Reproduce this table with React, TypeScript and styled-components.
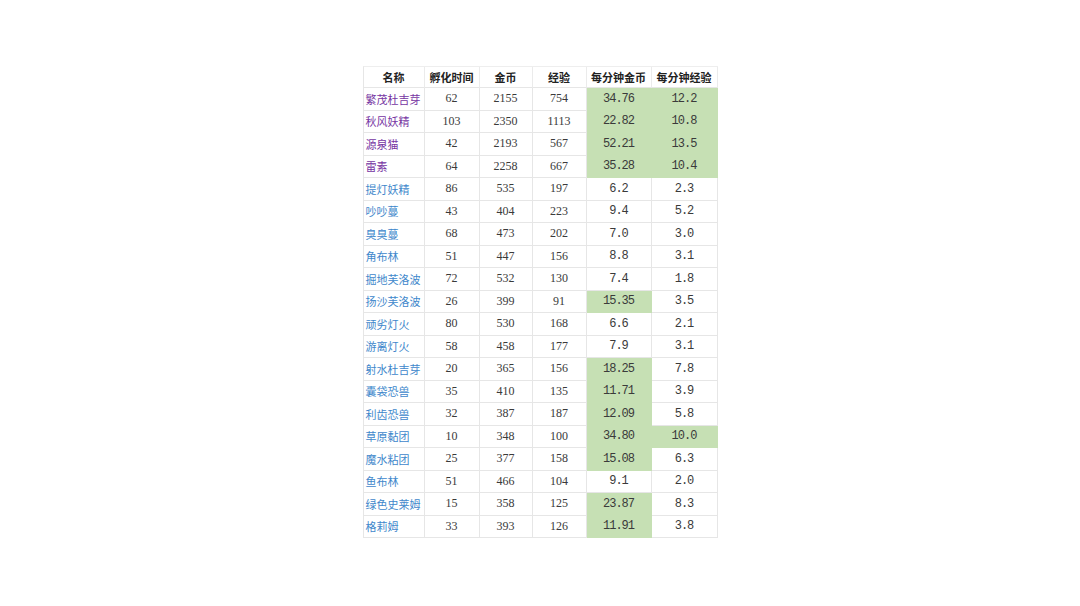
import React from 'react';
import styled, { createGlobalStyle } from 'styled-components';

const GlobalStyle = createGlobalStyle`
    html, body {
        margin: 0;
        padding: 0;
        background: #ffffff;
    }
    * {
        box-sizing: border-box;
    }
`;

const Page = styled.main`
    width: 100%;
    min-height: 100vh;
    display: flex;
    align-items: center;
    justify-content: center;
`;

const Table = styled.table`
    border-collapse: separate;
    border-spacing: 0;
    table-layout: fixed;
    width: 354px;
    border-top: 1px solid #eeeeee;
    border-left: 1px solid #e6e6e6;
    margin-top: -2px;
`;

const HeadRow = styled.tr`
    height: 21px;
`;

const Row = styled.tr`
    height: 22.5px;
`;

const HeadCell = styled.th`
    padding: 0;
    font-family: 'Noto Sans CJK SC', 'Noto Sans', sans-serif;
    font-size: 11px;
    font-weight: 700;
    color: #222;
    text-align: center;
    border-right: 1px solid #ebebeb;
    border-bottom: 1px solid #e6e6e6;
    white-space: nowrap;
`;

const NameCell = styled.td<{ $tone: 'purple' | 'blue' }>`
    padding: 0 0 0 2px;
    font-family: 'Noto Sans CJK SC', 'Noto Sans', sans-serif;
    font-size: 11px;
    color: ${(p) => (p.$tone === 'purple' ? '#7634a2' : '#3e87cb')};
    text-align: left;
    white-space: nowrap;
    border-right: 1px solid #e6e6e6;
    border-bottom: 1px solid #e6e6e6;
`;

const NumCell = styled.td`
    padding: 0;
    font-family: 'Liberation Serif', 'Times New Roman', serif;
    font-size: 12px;
    color: #3a3a3a;
    text-align: center;
    border-right: 1px solid #e6e6e6;
    border-bottom: 1px solid #e6e6e6;
`;

const RateCell = styled.td<{ $hot: boolean }>`
    padding: 0;
    font-family: 'Liberation Mono', 'Courier New', monospace;
    font-size: 12px;
    letter-spacing: -1px;
    color: #3a3a3a;
    text-align: center;
    background: ${(p) => (p.$hot ? '#c6e0b4' : '#ffffff')};
    border-right: 1px solid ${(p) => (p.$hot ? '#c6e0b4' : '#e6e6e6')};
    border-bottom: 1px solid ${(p) => (p.$hot ? '#c6e0b4' : '#e6e6e6')};
`;

type Pet = {
    name: string;
    tone: 'purple' | 'blue';
    hatch: number;
    gold: number;
    exp: number;
    goldRate: string;
    expRate: string;
    hotGold: boolean;
    hotExp: boolean;
};

const pets: Pet[] = [
    { name: '繁茂杜吉芽', tone: 'purple', hatch: 62, gold: 2155, exp: 754, goldRate: '34.76', expRate: '12.2', hotGold: true, hotExp: true },
    { name: '秋风妖精', tone: 'purple', hatch: 103, gold: 2350, exp: 1113, goldRate: '22.82', expRate: '10.8', hotGold: true, hotExp: true },
    { name: '源泉猫', tone: 'purple', hatch: 42, gold: 2193, exp: 567, goldRate: '52.21', expRate: '13.5', hotGold: true, hotExp: true },
    { name: '雷素', tone: 'purple', hatch: 64, gold: 2258, exp: 667, goldRate: '35.28', expRate: '10.4', hotGold: true, hotExp: true },
    { name: '提灯妖精', tone: 'blue', hatch: 86, gold: 535, exp: 197, goldRate: '6.2', expRate: '2.3', hotGold: false, hotExp: false },
    { name: '吵吵蔓', tone: 'blue', hatch: 43, gold: 404, exp: 223, goldRate: '9.4', expRate: '5.2', hotGold: false, hotExp: false },
    { name: '臭臭蔓', tone: 'blue', hatch: 68, gold: 473, exp: 202, goldRate: '7.0', expRate: '3.0', hotGold: false, hotExp: false },
    { name: '角布林', tone: 'blue', hatch: 51, gold: 447, exp: 156, goldRate: '8.8', expRate: '3.1', hotGold: false, hotExp: false },
    { name: '掘地芙洛波', tone: 'blue', hatch: 72, gold: 532, exp: 130, goldRate: '7.4', expRate: '1.8', hotGold: false, hotExp: false },
    { name: '扬沙芙洛波', tone: 'blue', hatch: 26, gold: 399, exp: 91, goldRate: '15.35', expRate: '3.5', hotGold: true, hotExp: false },
    { name: '顽劣灯火', tone: 'blue', hatch: 80, gold: 530, exp: 168, goldRate: '6.6', expRate: '2.1', hotGold: false, hotExp: false },
    { name: '游离灯火', tone: 'blue', hatch: 58, gold: 458, exp: 177, goldRate: '7.9', expRate: '3.1', hotGold: false, hotExp: false },
    { name: '射水杜吉芽', tone: 'blue', hatch: 20, gold: 365, exp: 156, goldRate: '18.25', expRate: '7.8', hotGold: true, hotExp: false },
    { name: '囊袋恐兽', tone: 'blue', hatch: 35, gold: 410, exp: 135, goldRate: '11.71', expRate: '3.9', hotGold: true, hotExp: false },
    { name: '利齿恐兽', tone: 'blue', hatch: 32, gold: 387, exp: 187, goldRate: '12.09', expRate: '5.8', hotGold: true, hotExp: false },
    { name: '草原黏团', tone: 'blue', hatch: 10, gold: 348, exp: 100, goldRate: '34.80', expRate: '10.0', hotGold: true, hotExp: true },
    { name: '魔水粘团', tone: 'blue', hatch: 25, gold: 377, exp: 158, goldRate: '15.08', expRate: '6.3', hotGold: true, hotExp: false },
    { name: '鱼布林', tone: 'blue', hatch: 51, gold: 466, exp: 104, goldRate: '9.1', expRate: '2.0', hotGold: false, hotExp: false },
    { name: '绿色史莱姆', tone: 'blue', hatch: 15, gold: 358, exp: 125, goldRate: '23.87', expRate: '8.3', hotGold: true, hotExp: false },
    { name: '格莉姆', tone: 'blue', hatch: 33, gold: 393, exp: 126, goldRate: '11.91', expRate: '3.8', hotGold: true, hotExp: false },
];

const colWidths = [61, 55, 53, 54, 65, 66];
const headers = ['名称', '孵化时间', '金币', '经验', '每分钟金币', '每分钟经验'];

const App: React.FC = () => {
    return (
        <>
            <GlobalStyle />
            <Page>
                <Table>
                    <colgroup>
                        {colWidths.map((w, i) => (
                            <col key={i} style={{ width: w }} />
                        ))}
                    </colgroup>
                    <thead>
                        <HeadRow>
                            {headers.map((h) => (
                                <HeadCell key={h}>{h}</HeadCell>
                            ))}
                        </HeadRow>
                    </thead>
                    <tbody>
                        {pets.map((p) => (
                            <Row key={p.name}>
                                <NameCell $tone={p.tone}>{p.name}</NameCell>
                                <NumCell>{p.hatch}</NumCell>
                                <NumCell>{p.gold}</NumCell>
                                <NumCell>{p.exp}</NumCell>
                                <RateCell $hot={p.hotGold}>{p.goldRate}</RateCell>
                                <RateCell $hot={p.hotExp}>{p.expRate}</RateCell>
                            </Row>
                        ))}
                    </tbody>
                </Table>
            </Page>
        </>
    );
};

export default App;
